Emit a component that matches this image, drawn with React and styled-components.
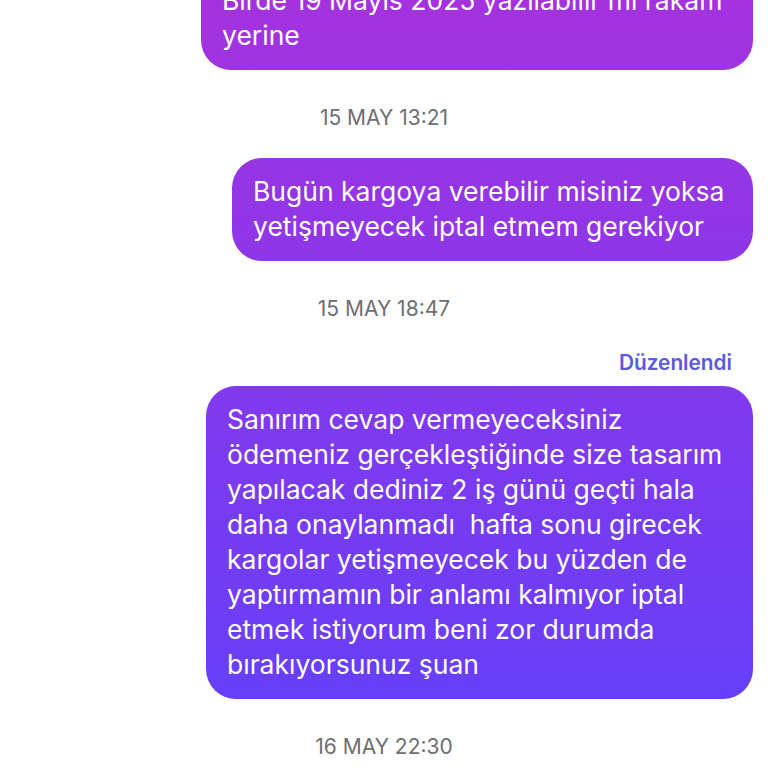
import React from "react";
import styled, { createGlobalStyle } from "styled-components";

const GlobalStyle = createGlobalStyle`
    html, body {
        margin: 0;
        padding: 0;
        background: #ffffff;
        overflow: hidden;
    }
    body {
        font-family: Inter, "Noto Sans", "Liberation Sans", sans-serif;
        -webkit-font-smoothing: antialiased;
    }
`;

const Thread = styled.div`
    display: flex;
    flex-direction: column;
    align-items: flex-end;
    width: 768px;
    height: 768px;
    padding-right: 15px;
    box-sizing: border-box;
    overflow: hidden;
`;

const Bubble = styled.div`
    box-sizing: border-box;
    width: ${(props) => props.width}px;
    margin-top: ${(props) => props.top || 0}px;
    padding: 16px 20px 17px 21px;
    border-radius: 30px;
    /* instagram style gradient that follows the screen, not the bubble */
    background: linear-gradient(180deg, #a432de 0px, #6140fb 768px);
    background-attachment: fixed;
    color: #ffffff;
    font-size: 26.5px;
    line-height: 35px;
    white-space: nowrap;
`;

const Line = styled.div``;

const Stamp = styled.div`
    align-self: center;
    margin: 36px 0 ${(props) => props.bottom}px 15px;
    font-size: 21px;
    line-height: 24px;
    color: #6e6e73;
`;

const Edited = styled.div`
    margin: 0 21px 11px 0;
    font-size: 20.8px;
    line-height: 24px;
    font-weight: 600;
    color: #5a5ae0;
`;

const messages = {
    first: ["Birde 19 Mayıs 2025 yazılabilir mi rakam", "yerine"],
    second: [
        "Bugün kargoya verebilir misiniz yoksa",
        "yetişmeyecek iptal etmem gerekiyor",
    ],
    third: [
        "Sanırım cevap vermeyeceksiniz",
        "ödemeniz gerçekleştiğinde size tasarım",
        "yapılacak dediniz 2 iş günü geçti hala",
        "daha onaylanmadı\u00a0 hafta sonu girecek",
        "kargolar yetişmeyecek bu yüzden de",
        "yaptırmamın bir anlamı kalmıyor iptal",
        "etmek istiyorum beni zor durumda",
        "bırakıyorsunuz şuan",
    ],
};

const Message = ({ lines, width, top }) => (
    <Bubble width={width} top={top}>
        {lines.map((l, i) => (
            <Line key={i}>{l}</Line>
        ))}
    </Bubble>
);

export default function App() {
    return (
        <>
            <GlobalStyle />
            <Thread>
                <Message lines={messages.first} width={552} top={-33} />
                <Stamp bottom={28}>15 MAY 13:21</Stamp>
                <Message lines={messages.second} width={521} />
                <Stamp bottom={30}>15 MAY 18:47</Stamp>
                <Edited>Düzenlendi</Edited>
                <Message lines={messages.third} width={547} />
                <Stamp bottom={0}>16 MAY 22:30</Stamp>
            </Thread>
        </>
    );
}
